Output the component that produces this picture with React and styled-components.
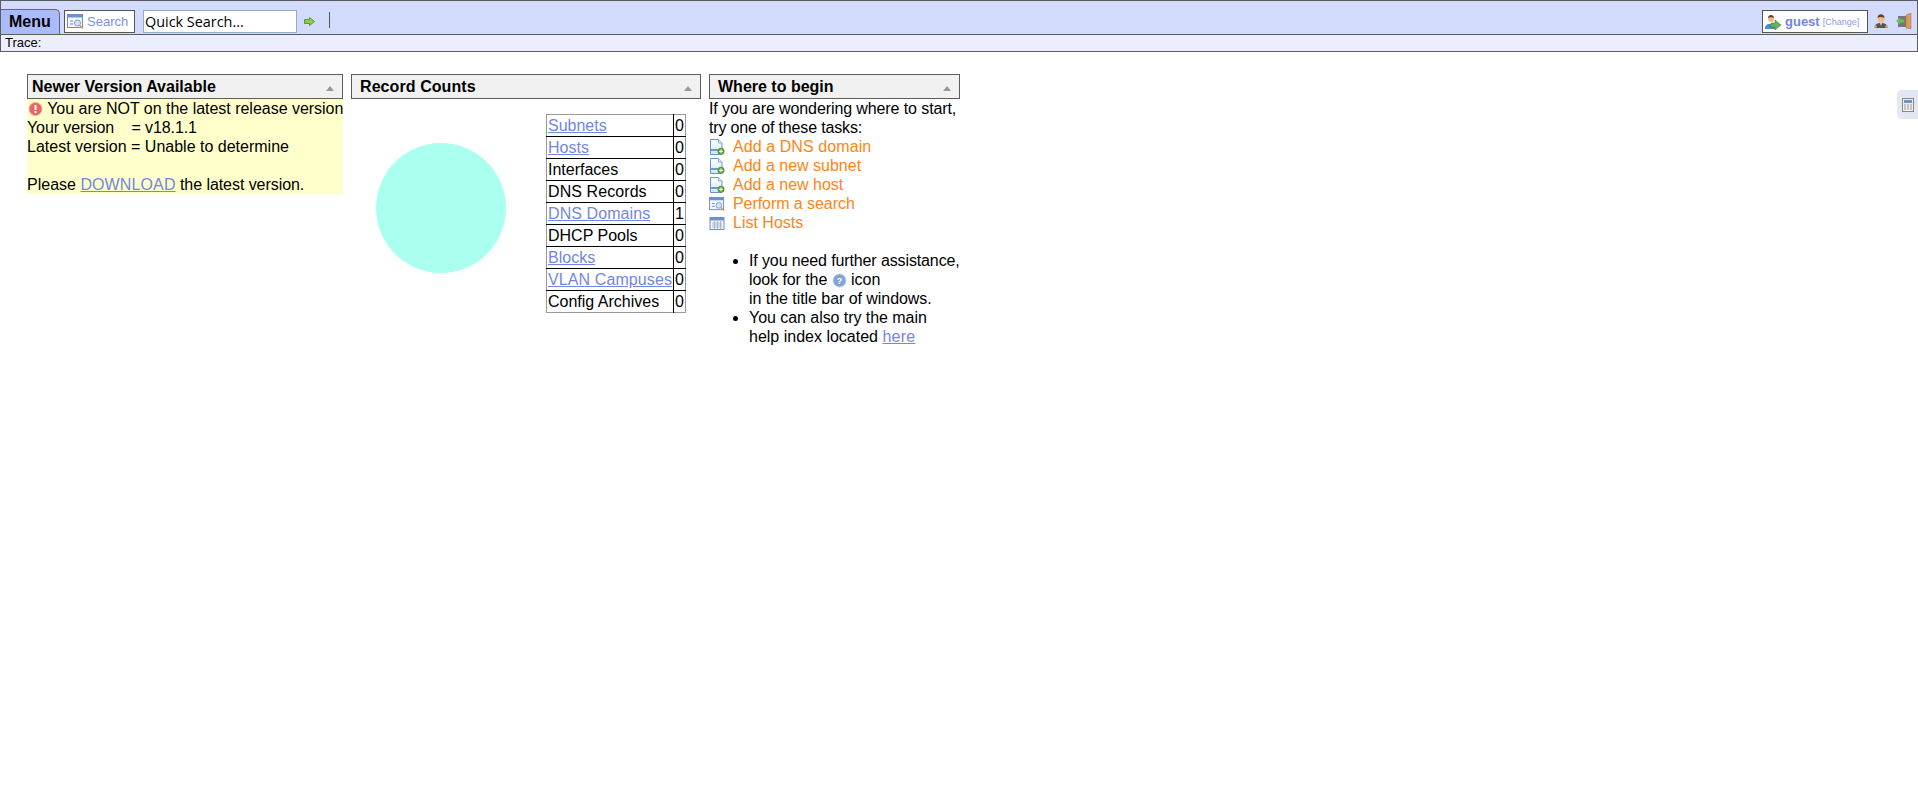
import React from 'react';
import styled, { createGlobalStyle } from 'styled-components';

const Global = createGlobalStyle`
  html, body { margin: 0; padding: 0; background: #fff; }
  body { font-family: "Liberation Sans", Arial, sans-serif; font-size: 16px; color: #000; }
  a { color: #7386e0; }
`;

const Page = styled.div`width: 1918px; height: 788px; position: relative; overflow: hidden;`;
const TopBar = styled.div`
  height: 35px; box-sizing: border-box; border: 1px solid #5c5c5c;
  background: #d3dbfd; display: flex; align-items: flex-end;
`;
const MenuTab = styled.div`
  width: 59px; height: 25px; box-sizing: border-box; background: #a9bbfb; border: 1px solid #667; border-left: 0; border-bottom: 0;
  border-top-right-radius: 5px; font-weight: bold; font-size: 16px; line-height: 24px; padding-left: 8px;
`;
const SearchBox = styled.div`
  margin: 0 0 1px 4px; width: 71px; height: 23px; box-sizing: border-box; background: #fff; border: 1px solid #555;
  display: flex; align-items: center; gap: 3px; padding-left: 2px; font-size: 13px; color: #7d8fe0;
`;
const QuickInput = styled.div`
  margin: 0 0 1px 8px; width: 154px; height: 23px; box-sizing: border-box; background: #fff; border: 1px solid #8fb0c4;
  font-family: "Open Sans", sans-serif; font-size: 14.4px; line-height: 21px; padding-left: 1px;
`;
const Go = styled.div`margin: 0 0 8px 7px; width: 11px; height: 9px; display: flex;`;
const Divider = styled.div`margin: 0 0 6px 14px; width: 1px; height: 16px; background: #555;`;
const Spacer = styled.div`flex: 1;`;
const UserBox = styled.div`
  width: 106px; height: 23px; box-sizing: border-box; margin: 0 0 1px 0; background: #fff; border: 1px solid #555;
  display: flex; align-items: center; padding-left: 2px; gap: 4px; color: #7186de; font-size: 13px; font-weight: bold;
`;
const Change = styled.span`font-size: 9px; font-weight: normal; color: #8c9de6; margin-left: -1px;`;
const TopIcon = styled.div`margin: 0 0 5px 5px; width: 16px; height: 16px; display: flex;`;
const LastIcon = styled(TopIcon)`margin: 0 5px 5px 7px;`;
const TraceBar = styled.div`
  height: 17px; box-sizing: border-box; background: #eceefe; border: 1px solid #5c5c5c; border-top: 0;
  font-size: 13px; line-height: 16px; padding-left: 4px;
`;
const Columns = styled.div`display: flex; gap: 8px; padding: 22px 0 0 27px; align-items: flex-start;`;
const Panel = styled.div`width: ${p => p.$w}px; line-height: 19px;`;
const Head = styled.div`
  height: 25px; box-sizing: border-box; border: 1px solid #5c5c5c; background: #f1f1f1; font-weight: bold; line-height: 23px;
  padding-left: ${p => p.$pad}px; display: flex; justify-content: space-between; align-items: center; padding-right: 8px;
`;
const Caret = styled.span`width: 0; height: 0; border: 4px solid transparent; border-top: 0; border-bottom: 5px solid #999; margin-top: 3px;`;
const Notice = styled.div`background: #ffffcc; white-space: pre; height: 95px; box-sizing: border-box;`;
const Fit = styled.span`letter-spacing: ${p => p.$ls}px;`;
const FitLink = styled.a`letter-spacing: ${p => p.$ls || 0}px;`;
const Alert = styled.svg`vertical-align: -3px;`;
const Counts = styled.div`display: flex; padding-top: 15px;`;
const CircleArea = styled.div`width: 195px; height: 199px; flex: none; display: flex;`;
const Table = styled.table`border-collapse: collapse; border: 1px solid #999; line-height: 19px;`;
const Row = styled.tr`
  &:first-child td { border-top: 0; }
  &:last-child td { border-bottom: 0; }
`;
const Td = styled.td`
  border: 1px solid #000; padding: 1px; white-space: nowrap; height: 19px;
  &:first-child { border-left: 0; }
  &:last-child { border-right: 0; }
`;
const Task = styled.div`display: flex; align-items: center; height: 19px; color: #ff8412;`;
const TaskIcon = styled.span`width: 24px; flex: none; display: flex;`;
const Help = styled.ul`margin: 19px 0 0; padding: 0 0 0 40px; white-space: nowrap;`;
const HelpIcon = styled.svg`vertical-align: -3px;`;
const Side = styled.div`
  position: absolute; right: 0; top: 90px; width: 21px; height: 29px; background: #e4e6f2; border-radius: 5px 0 0 5px;
  display: flex; align-items: center; justify-content: center;
`;

const SearchIco = ({ s = 17 }) => (
  <svg width={s} height={s} viewBox="0 0 17 17">
    <rect x=".5" y="1.500" width="15" height="13" fill="#f3f6fb" stroke="#6f8fb8" />
    <rect x=".5" y="1.500" width="15" height="3" fill="#6c92cc" />
    <path d="M3 8h3M3 11h3" stroke="#6f8fb8" />
    <circle cx="10.500" cy="10" r="3" fill="#d7e3f4" stroke="#7f9dc4" />
    <path d="M13 12.500l3 3" stroke="#d89a55" strokeWidth="1.600" />
  </svg>
);
const Doc = () => (
  <svg width="16" height="16" viewBox="0 0 16 16">
    <defs>
      <linearGradient id="docfill" x1="0" y1="0" x2="0" y2="1">
        <stop offset="0" stopColor="#ffffff" />
        <stop offset="1" stopColor="#d3e4f7" />
      </linearGradient>
    </defs>
    <path d="M1.500.5h8l3.500 3.500v11.500h-11.500z" fill="url(#docfill)" stroke="#6b96c8" />
    <path d="M9.500.5v3.500h3.500" fill="#dce9f7" stroke="#8fb0d4" />
    <rect x="2" y="10" width="8" height="2" fill="#6c9ad4" />
    <circle cx="12" cy="12.300" r="3.500" fill="#5c9a3c" />
    <path d="M10 12.300h4M12 10.300v4" stroke="#fff" />
  </svg>
);
const ListIco = () => (
  <svg width="16" height="16" viewBox="0 0 16 16">
    <rect x="1" y="2.500" width="14" height="12" fill="#f3f6fb" stroke="#6f8fb8" />
    <rect x="1" y="2.500" width="14" height="3" fill="#6c92cc" />
    <path d="M3 8h10M3 10h10M3 12h10M5.500 6v8M8.500 6v8M11.500 6v8" stroke="#8ea6c6" strokeWidth=".7" />
  </svg>
);
const Person = () => (
  <svg width="16" height="16" viewBox="0 0 16 16">
    <path d="M1.500 15c0-4 3-5 6.500-5s6.500 1 6.500 5z" fill="#555" />
    <circle cx="2.500" cy="13.500" r="1.300" fill="#e8a868" />
    <circle cx="13.500" cy="13.500" r="1.300" fill="#e8a868" />
    <circle cx="8" cy="6" r="3.500" fill="#eeb98c" />
    <path d="M4.500 5c0-5 7-5 7 0-2-1.500-5-1.500-7 0z" fill="#6a3d1e" />
    <path d="M7 10h2l-1 3z" fill="#ddd" />
  </svg>
);
const UserIco = () => (
  <svg width="16" height="16" viewBox="0 0 16 16">
    <path d="M0 15c0-4 2-5 5-5s5 1 5 5z" fill="#3f8fd8" />
    <circle cx="6" cy="5" r="3" fill="#eeb98c" />
    <path d="M3 4c0-4 6-4 6 0-2-1-4-1-6 0z" fill="#6a3d1e" />
    <path d="M6 9h4V6l6 5-6 5v-3H6z" fill="#6fae5d" stroke="#3f7f2f" strokeWidth=".6" />
  </svg>
);
const DoorIco = () => (
  <svg width="16" height="16" viewBox="0 0 16 16">
    <rect x="2" y="3" width="9" height="11" fill="#777" />
    <path d="M10 2l5-2v16l-5-1z" fill="#d89a55" stroke="#a8703a" strokeWidth=".5" />
    <path d="M0 8l4-3.500v2h4v3H4v2z" fill="#6fbf5d" />
  </svg>
);

const rows = [
  ['Subnets', 0, true, 0], ['Hosts', 0, true, 0], ['Interfaces', 0, false, 0], ['DNS Records', 0, false, 0.08],
  ['DNS Domains', 1, true, 0.08], ['DHCP Pools', 0, false, 0], ['Blocks', 0, true, 0],
  ['VLAN Campuses', 0, true, 0.1], ['Config Archives', 0, false, 0],
];
const tasks = [
  ['Add a DNS domain', <Doc />, 0.08], ['Add a new subnet', <Doc />, 0], ['Add a new host', <Doc />, 0],
  ['Perform a search', <SearchIco s={16} />, -0.06], ['List Hosts', <ListIco />, 0],
];

export default function App() {
  return (
    <Page>
      <Global />
      <TopBar>
        <MenuTab>Menu</MenuTab>
        <SearchBox><SearchIco />Search</SearchBox>
        <QuickInput>Quick Search...</QuickInput>
        <Go>
          <svg width="11" height="9" viewBox="0 0 11 9"><path d="M.5 2.500h5V.5L10.500 4.500 5.500 8.500v-2h-5z" fill="#8ccc4a" stroke="#5a9a2c" /></svg>
        </Go>
        <Divider />
        <Spacer />
        <UserBox><UserIco />guest <Change>[Change]</Change></UserBox>
        <TopIcon><Person /></TopIcon>
        <LastIcon><DoorIco /></LastIcon>
      </TopBar>
      <TraceBar>Trace:</TraceBar>
      <Columns>
        <Panel $w={316}>
          <Head $pad={4}>Newer Version Available<Caret /></Head>
          <Notice>
            <Alert width="16" height="16" viewBox="0 0 16 16">
              <circle cx="8.500" cy="8" r="6.500" fill="#e8665f" stroke="#e0b0aa" />
              <rect x="7.500" y="4" width="2" height="5" fill="#fff" />
              <rect x="7.500" y="10" width="2" height="2" fill="#fff" />
            </Alert>
            <Fit $ls={-0.02}>{' You are NOT on the latest release version'}</Fit>{'\n'}
            <Fit $ls={-0.1}>{'Your version    = v18.1.1'}</Fit>
            {'\nLatest version = Unable to determine\n\nPlease '}
            <FitLink href="#d" $ls={0.12}>DOWNLOAD</FitLink><Fit $ls={-0.06}> the latest version.</Fit>
          </Notice>
        </Panel>
        <Panel $w={350}>
          <Head $pad={8}><Fit $ls={0.08}>Record Counts</Fit><Caret /></Head>
          <Counts>
            <CircleArea>
              <svg width="195" height="199" viewBox="0 0 195 199"><circle cx="90" cy="94" r="65" fill="#aaffee" /></svg>
            </CircleArea>
            <Table>
              <tbody>
                {rows.map(([n, c, l, ls]) => (
                  <Row key={n}>
                    <Td>{l ? <FitLink href="#r" $ls={ls}>{n}</FitLink> : <Fit $ls={ls}>{n}</Fit>}</Td>
                    <Td>{c}</Td>
                  </Row>
                ))}
              </tbody>
            </Table>
          </Counts>
        </Panel>
        <Panel $w={251}>
          <Head $pad={8}>Where to begin<Caret /></Head>
          <div><Fit $ls={-0.1}>If you are wondering where to start,</Fit><br /><Fit $ls={-0.15}>try one of these tasks:</Fit></div>
          {tasks.map(([t, i, ls]) => <Task key={t}><TaskIcon>{i}</TaskIcon><Fit $ls={ls}>{t}</Fit></Task>)}
          <Help>
            <li>
              <Fit $ls={-0.12}>If you need further assistance,</Fit><br />
              <Fit $ls={-0.08}>look for the </Fit>
              <HelpIcon width="15" height="15" viewBox="0 0 15 15"><circle cx="7.500" cy="7.500" r="6.500" fill="#7fa5d6" stroke="#c3d0e2" /><text x="7.500" y="11" textAnchor="middle" fontSize="9" fontWeight="bold" fill="#fff" fontFamily="Liberation Sans">?</text></HelpIcon> icon<br />
              <Fit $ls={-0.05}>in the title bar of windows.</Fit>
            </li>
            <li>
              <Fit $ls={-0.05}>You can also try the main</Fit><br />
              help index located <FitLink href="#h" $ls={0.2}>here</FitLink>
            </li>
          </Help>
        </Panel>
      </Columns>
      <Side>
        <svg width="12" height="14" viewBox="0 0 12 14"><rect x=".5" y=".5" width="11" height="13" fill="#eee" stroke="#888" /><rect x="2" y="2" width="8" height="3" fill="#6f8fc8" /><path d="M2 7h2M5 7h2M8 7h2M2 9h2M5 9h2M8 9h2M2 11h2M5 11h2M8 11h2" stroke="#999" /></svg>
      </Side>
    </Page>
  );
}
